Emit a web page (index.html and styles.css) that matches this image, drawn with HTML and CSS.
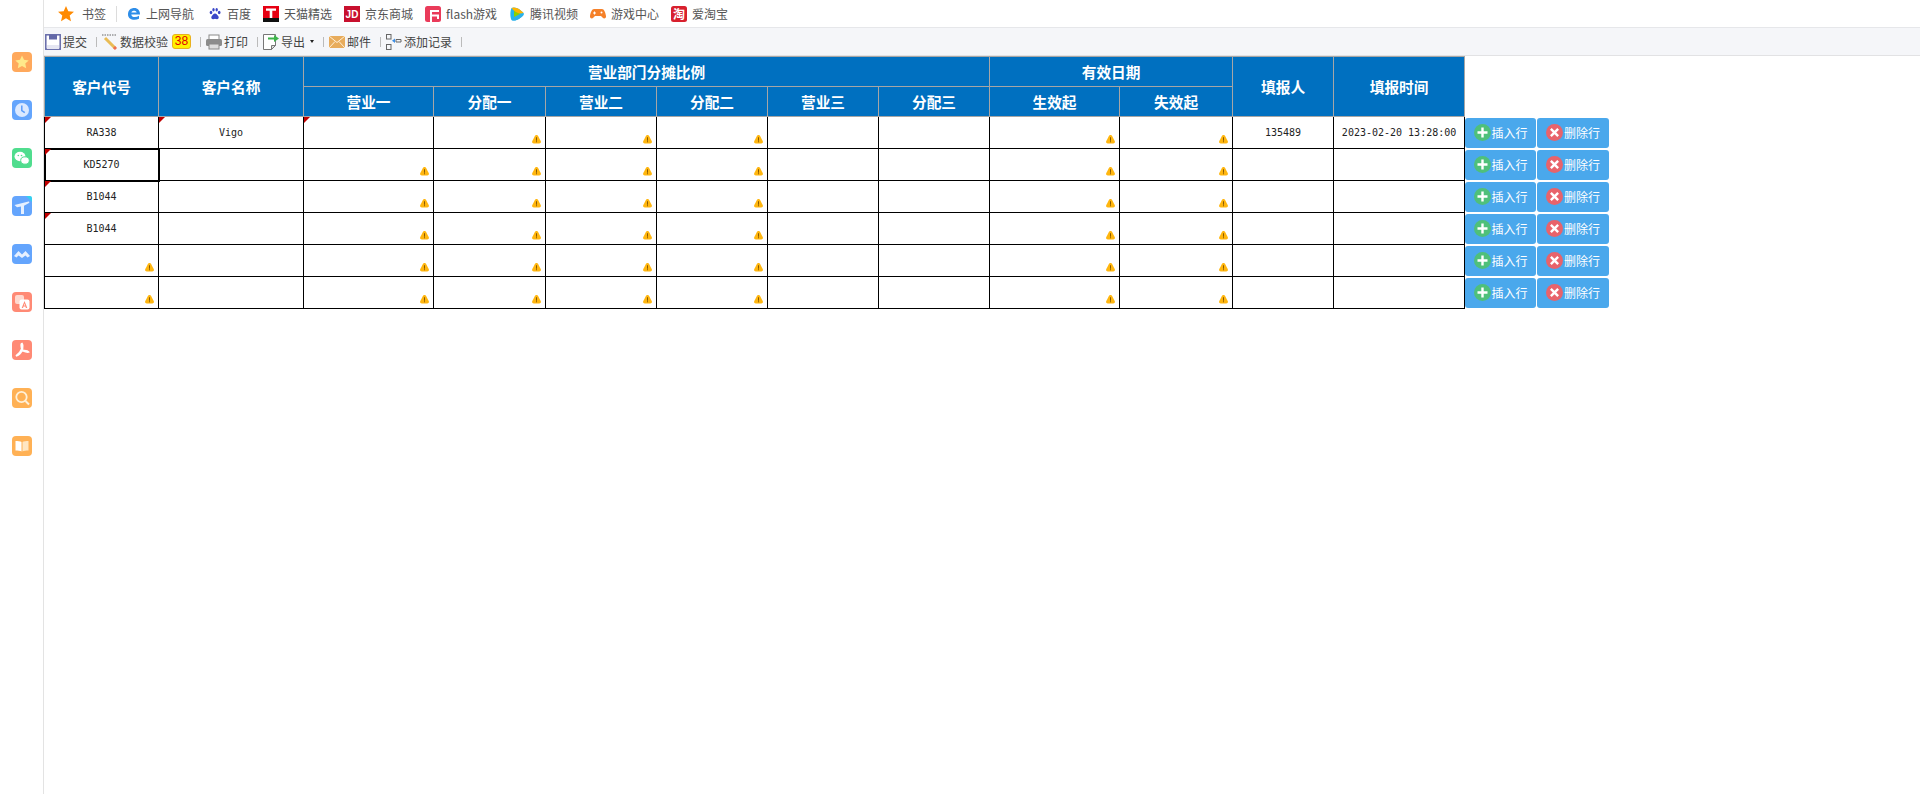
FILE: index.html
```html
<!DOCTYPE html>
<html lang="zh">
<head>
<meta charset="utf-8">
<title>客户分摊</title>
<link rel="stylesheet" href="styles.css">
</head>
<body>
<svg class="defs" width="0" height="0">
  <symbol id="w" viewBox="0 0 9 9"><path d="M4.500 0c.8 0 1.300.5 1.700 1.200l2.500 4.700C9.300 7.200 8.600 8.600 7.200 8.600H1.800C.4 8.600-.3 7.200.3 5.900L2.800 1.200C3.200.5 3.700 0 4.500 0z" fill="#ffb60f"/><path d="M4 2.300h1v3.400H4zM4 6.300h1v1H4z" fill="#8a5a00"/></symbol>
  <symbol id="plus" viewBox="0 0 17 17"><circle cx="8.500" cy="8.500" r="8.500" fill="#4fc07a"/><path d="M7.300 3.500h2.400v3.800h3.800v2.400H9.700v3.800H7.300V9.700H3.500V7.300h3.800z" fill="#fff"/></symbol>
  <symbol id="cross" viewBox="0 0 17 17"><circle cx="8.500" cy="8.500" r="8.500" fill="#e8636b"/><path d="M5.700 4 8.500 6.800 11.300 4 13 5.700 10.200 8.500 13 11.300 11.300 13 8.500 10.200 5.700 13 4 11.300 6.800 8.500 4 5.700z" fill="#fff"/></symbol>
</svg>
<div class="app">
  <aside class="side">
    <div class="app-ic orange"><svg viewBox="0 0 20 20"><path d="M10 3.500l2 4.300 4.700.6-3.400 3.200.9 4.700L10 14l-4.200 2.300.9-4.700-3.400-3.200 4.700-.6z" fill="#ffe98a"/></svg></div>
    <div class="app-ic blue"><svg viewBox="0 0 20 20"><circle cx="10" cy="10" r="7" fill="#dbe9ff"/><path d="M9.800 5.500v5l3 2.200" stroke="#5b9dfb" stroke-width="1.500" fill="none"/></svg></div>
    <div class="app-ic green"><svg viewBox="0 0 20 20"><ellipse cx="8" cy="8.500" rx="5.500" ry="4.700" fill="#fff"/><ellipse cx="13" cy="12.500" rx="4.300" ry="3.700" fill="#fff" stroke="#4fdc8c"/><circle cx="6.300" cy="7.500" r=".8" fill="#4fdc8c"/><circle cx="9.500" cy="7.500" r=".8" fill="#4fdc8c"/></svg></div>
    <div class="app-ic blue"><svg viewBox="0 0 20 20"><path d="M14 0h4a2 2 0 0 1 2 2v4z" fill="#35d0f0"/><path d="M2.500 9l14-3.500c1-.2 1.200 1 .5 1.400L12 9.800V18H9v-7.500l-4 .7z" fill="#e6f0ff"/></svg></div>
    <div class="app-ic blue"><svg viewBox="0 0 20 20"><path d="M2 12 6.500 7 10 10.500 13.500 7 18 12l-2.500 1.500-2-2L10 14l-3.500-2.500-2 2z" fill="#e6f0ff"/></svg></div>
    <div class="app-ic coral"><svg viewBox="0 0 20 20"><rect x="3" y="3" width="9" height="9" rx="2" fill="#ffd9cf"/><rect x="7.500" y="7.500" width="10" height="10" rx="2" fill="#fff"/><path d="M12.500 9l2.800 7h-1.400l-.5-1.400h-1.900l-.5 1.400h-1.300zM11.900 13.500h1.300l-.6-1.900z" fill="#ff8a75"/></svg></div>
    <div class="app-ic coral"><svg viewBox="0 0 20 20"><path d="M10 3.500c-1.200 0-.8 3.500-.2 5.200C9 11 6 14.500 4 16c2.500-.500 5-3.200 6-5.500 2 .8 4.500 2 6.500 1.500-1-1.700-4.300-1.500-6-1.300-.3-2 .8-6.700-.5-6.700z" fill="none" stroke="#fff" stroke-width="1.700"/></svg></div>
    <div class="app-ic amber"><svg viewBox="0 0 20 20"><circle cx="9.500" cy="9" r="5.200" fill="none" stroke="#fff0d8" stroke-width="1.800"/><path d="M13.500 13l3.500 3.500" stroke="#fff0d8" stroke-width="2"/></svg></div>
    <div class="app-ic amber"><svg viewBox="0 0 20 20"><path d="M3.500 5c2 0 5 0 6 1v9.500c-1-1-4-1-6-1z" fill="#fff"/><path d="M16.500 5c-2 0-5 0-6 1v9.500c1-1 4-1 6-1z" fill="#ffe6c2"/></svg></div>
  </aside>
  <div class="main">
    <nav class="bookmarks">
      <a class="bm first"><svg class="ic16" viewBox="0 0 16 16"><path d="M8 0l2.300 5.300 5.700.5-4.300 3.800 1.300 5.600L8 12.300l-5 2.900 1.300-5.600L0 5.800l5.700-.5z" fill="#ff8a00"/></svg>书签</a>
      <i class="bm-sep"></i>
      <a class="bm nav"><svg class="ic14" viewBox="0 0 14 14"><path d="M1 7.500C1 3 4 1 7.300 1c3.500 0 5.700 2.400 5.700 6.500H4.300c0 2.700 4.300 3.500 7.700 1.300v3c-5 2.400-11 .6-11-4.300zM4.400 5.500h5.200C9.400 3.300 4.700 3.300 4.400 5.500z" fill="#2e8de8"/></svg>上网导航</a>
      <a class="bm"><svg class="ic14" viewBox="0 0 14 14" fill="#3a46c8"><ellipse cx="3" cy="5.500" rx="1.300" ry="1.700"/><ellipse cx="5.500" cy="2.800" rx="1.200" ry="1.700"/><ellipse cx="8.700" cy="2.800" rx="1.200" ry="1.700"/><ellipse cx="11.200" cy="5.500" rx="1.300" ry="1.700"/><path d="M7 6.500c1.500 0 2 1.300 3 2.300 1.300 1.300.8 3.700-1.200 3.400-1-.1-1.500-.4-1.800-.4s-.9.300-1.800.4c-2 .3-2.500-2.100-1.200-3.400C5 7.800 5.500 6.500 7 6.500z"/></svg>百度</a>
      <a class="bm"><svg class="ic16" viewBox="0 0 16 16"><rect width="16" height="16" fill="#e60012"/><rect y="12" width="16" height="4" fill="#111"/><path d="M3 2.500h10v2.200H9.300V12H6.700V4.700H3z" fill="#fff"/></svg>天猫精选</a>
      <a class="bm"><svg class="ic16" viewBox="0 0 16 16"><rect width="16" height="16" fill="#c8102e"/><text x="8" y="12" class="jd">JD</text></svg>京东商城</a>
      <a class="bm"><svg class="ic16" viewBox="0 0 16 16"><rect width="16" height="16" rx="2.500" fill="#ea3b5a"/><path d="M5 4h9v2H7v2.500h7V13h-2v-2.500H7V16H5z" fill="#fff"/></svg>flash游戏</a>
      <a class="bm"><svg class="ic16" viewBox="0 0 16 16"><path d="M2.500 2c4-2 9.500 2 12 5 .6.700.6 1.400 0 2-2.500 3-8 7-12 5C1 11 1 5 2.500 2z" fill="#25b4f0"/><path d="M2.500 2c4-2 9.500 2 12 5L8 8z" fill="#ffb400"/><path d="M2.500 14c4 2 9.500-2 12-5L8 8z" fill="#2fb0e8"/><path d="M5 5l6 3-6 3z" fill="#8ed100"/></svg>腾讯视频</a>
      <a class="bm"><svg class="ic16" viewBox="0 0 16 16"><path d="M4 3h8c2 0 3.500 3.500 4 7 .3 2.500-2 3.500-3.500 1.500L11 10H5l-1.500 1.500C2 13.500-.3 12.500 0 10c.5-3.500 2-7 4-7z" fill="#f5812a"/><path d="M4 5.500h1v1h1v1H5v1H4v-1H3v-1h1z" fill="#fff"/><circle cx="11.500" cy="6.500" r="1" fill="#fff"/></svg>游戏中心</a>
      <a class="bm"><svg class="ic16" viewBox="0 0 16 16"><rect width="16" height="16" rx="2.500" fill="#d8202e"/><text x="8" y="13" class="tao">淘</text></svg>爱淘宝</a>
    </nav>
    <div class="toolbar">
      <a class="tool"><svg class="ic16" viewBox="0 0 16 16"><rect x=".8" y=".8" width="14.400" height="14.400" fill="#fff" stroke="#6469a8" stroke-width="1.500"/><path d="M4 1h8v4.500H4z" fill="#6469a8"/><path d="M2 11h12v4H2z" fill="#e5e6f2"/></svg>提交</a>
      <i class="sep"></i>
      <a class="tool"><svg class="ic16" viewBox="0 0 16 16"><path d="M0 1h15" stroke="#666" stroke-dasharray="1.500 1"/><path d="M3 4l10 10" stroke="#e9bc55" stroke-width="3"/><path d="M12 13l2 2" stroke="#ef6f50" stroke-width="3"/></svg>数据校验<b class="badge">38</b></a>
      <i class="sep"></i>
      <a class="tool"><svg class="ic16" viewBox="0 0 16 16"><rect x="3" y="1" width="10" height="5" fill="#fff" stroke="#8a8a8a"/><rect y="5" width="16" height="7" rx="1.500" fill="#8c8c8c"/><rect x="3" y="10" width="10" height="5" fill="#ddd" stroke="#8a8a8a"/></svg>打印</a>
      <i class="sep"></i>
      <a class="tool"><svg class="ic16" viewBox="0 0 16 16"><path d="M.5.500h12v11l-4 4h-8z" fill="#fff" stroke="#777"/><path d="M8.500 11.500h4l-4 4z" fill="#ddd" stroke="#777"/><path d="M5 3.500h6V1l5 3.500L11 8V5.500H5z" fill="#3cb44a"/></svg>导出<span class="caret"></span></a>
      <i class="sep"></i>
      <a class="tool"><svg class="ic16" viewBox="0 0 16 16"><rect y="2" width="16" height="12" fill="#e8ac5c"/><path d="M0 2l8 6.500L16 2M0 14l6-6.500M16 14l-6-6.500" fill="none" stroke="#fff0d8"/></svg>邮件</a>
      <i class="sep"></i>
      <a class="tool"><svg class="ic16" viewBox="0 0 16 16"><g fill="none" stroke="#666"><rect x=".5" y=".5" width="4.500" height="4.500"/><rect x=".5" y="10.500" width="4.500" height="5"/><path d="M10 5.500h5v2.500h-5z"/></g><path d="M6 6.800l3-2.300v4.600z" fill="#3a8ee6"/></svg>添加记录</a>
      <i class="sep"></i>
    </div>
    <table class="sheet">
      <colgroup>
        <col class="c114"><col class="c145"><col class="c130"><col class="c112"><col class="c111"><col class="c111"><col class="c111"><col class="c111"><col class="c130"><col class="c113"><col class="c101"><col class="c131"><col class="c146">
      </colgroup>
      <thead>
        <tr>
          <th rowspan="2">客户代号</th>
          <th rowspan="2">客户名称</th>
          <th colspan="6">营业部门分摊比例</th>
          <th colspan="2">有效日期</th>
          <th rowspan="2">填报人</th>
          <th rowspan="2">填报时间</th>
          <td rowspan="2" class="blank"></td>
        </tr>
        <tr>
          <th>营业一</th><th>分配一</th><th>营业二</th><th>分配二</th><th>营业三</th><th>分配三</th><th>生效起</th><th>失效起</th>
        </tr>
      </thead>
      <tbody>
        <tr>
          <td class="mark">RA338</td><td class="mark">Vigo</td><td class="mark"></td>
          <td><svg class="warn"><use href="#w"/></svg></td><td><svg class="warn"><use href="#w"/></svg></td><td><svg class="warn"><use href="#w"/></svg></td><td></td><td></td>
          <td><svg class="warn"><use href="#w"/></svg></td><td><svg class="warn"><use href="#w"/></svg></td>
          <td>135489</td><td>2023-02-20 13:28:00</td>
          <td class="actions"><div class="btns"><a class="btn"><svg class="bi"><use href="#plus"/></svg>插入行</a><a class="btn"><svg class="bi"><use href="#cross"/></svg>删除行</a></div></td>
        </tr>
        <tr>
          <td class="mark sel">KD5270</td><td></td>
          <td><svg class="warn"><use href="#w"/></svg></td><td><svg class="warn"><use href="#w"/></svg></td><td><svg class="warn"><use href="#w"/></svg></td><td><svg class="warn"><use href="#w"/></svg></td><td></td><td></td>
          <td><svg class="warn"><use href="#w"/></svg></td><td><svg class="warn"><use href="#w"/></svg></td>
          <td></td><td></td>
          <td class="actions"><div class="btns"><a class="btn"><svg class="bi"><use href="#plus"/></svg>插入行</a><a class="btn"><svg class="bi"><use href="#cross"/></svg>删除行</a></div></td>
        </tr>
        <tr>
          <td class="mark">B1044</td><td></td>
          <td><svg class="warn"><use href="#w"/></svg></td><td><svg class="warn"><use href="#w"/></svg></td><td><svg class="warn"><use href="#w"/></svg></td><td><svg class="warn"><use href="#w"/></svg></td><td></td><td></td>
          <td><svg class="warn"><use href="#w"/></svg></td><td><svg class="warn"><use href="#w"/></svg></td>
          <td></td><td></td>
          <td class="actions"><div class="btns"><a class="btn"><svg class="bi"><use href="#plus"/></svg>插入行</a><a class="btn"><svg class="bi"><use href="#cross"/></svg>删除行</a></div></td>
        </tr>
        <tr>
          <td class="mark">B1044</td><td></td>
          <td><svg class="warn"><use href="#w"/></svg></td><td><svg class="warn"><use href="#w"/></svg></td><td><svg class="warn"><use href="#w"/></svg></td><td><svg class="warn"><use href="#w"/></svg></td><td></td><td></td>
          <td><svg class="warn"><use href="#w"/></svg></td><td><svg class="warn"><use href="#w"/></svg></td>
          <td></td><td></td>
          <td class="actions"><div class="btns"><a class="btn"><svg class="bi"><use href="#plus"/></svg>插入行</a><a class="btn"><svg class="bi"><use href="#cross"/></svg>删除行</a></div></td>
        </tr>
        <tr>
          <td><svg class="warn"><use href="#w"/></svg></td><td></td>
          <td><svg class="warn"><use href="#w"/></svg></td><td><svg class="warn"><use href="#w"/></svg></td><td><svg class="warn"><use href="#w"/></svg></td><td><svg class="warn"><use href="#w"/></svg></td><td></td><td></td>
          <td><svg class="warn"><use href="#w"/></svg></td><td><svg class="warn"><use href="#w"/></svg></td>
          <td></td><td></td>
          <td class="actions"><div class="btns"><a class="btn"><svg class="bi"><use href="#plus"/></svg>插入行</a><a class="btn"><svg class="bi"><use href="#cross"/></svg>删除行</a></div></td>
        </tr>
        <tr>
          <td><svg class="warn"><use href="#w"/></svg></td><td></td>
          <td><svg class="warn"><use href="#w"/></svg></td><td><svg class="warn"><use href="#w"/></svg></td><td><svg class="warn"><use href="#w"/></svg></td><td><svg class="warn"><use href="#w"/></svg></td><td></td><td></td>
          <td><svg class="warn"><use href="#w"/></svg></td><td><svg class="warn"><use href="#w"/></svg></td>
          <td></td><td></td>
          <td class="actions"><div class="btns"><a class="btn"><svg class="bi"><use href="#plus"/></svg>插入行</a><a class="btn"><svg class="bi"><use href="#cross"/></svg>删除行</a></div></td>
        </tr>
      </tbody>
    </table>
  </div>
</div>
</body>
</html>
```

FILE: styles.css
```css
* { box-sizing: border-box; }
html, body { margin: 0; height: 100%; background: #fff; overflow: hidden; }
body { font-family: "Noto Sans CJK SC", "Noto Sans", sans-serif; font-size: 12px; color: #444; }
.defs { display: block; height: 0; }
.app { display: flex; height: 794px; }

.side { width: 44px; flex: none; border-right: 1px solid #e3e3e3; padding: 52px 0 0 12px; display: flex; flex-direction: column; gap: 28px; }
.app-ic { width: 20px; height: 20px; border-radius: 4px; }
.app-ic svg { display: block; width: 20px; height: 20px; }
.orange { background: #ffa95c; }
.blue { background: #64a5fd; }
.green { background: #50dd8e; }
.coral { background: #ff8a75; }
.amber { background: #ffb155; }

.main { flex: 1; min-width: 0; }
.bookmarks { height: 28px; display: flex; align-items: center; padding-left: 14px; border-bottom: 1px solid #e6e7ea; background: #fff; }
.bm { display: flex; align-items: center; gap: 5px; margin-right: 12px; color: #555; line-height: 1; white-space: nowrap; }
.bm.first { gap: 8px; margin-right: 10px; }
.bm.nav { margin-right: 14px; }
.bm-sep { width: 1px; height: 16px; background: #dcdcdc; margin-right: 10px; }
.ic14 { width: 14px; height: 14px; flex: none; }
.ic16 { width: 16px; height: 16px; flex: none; }
.jd { font: bold 10px "Liberation Sans", sans-serif; fill: #fff; text-anchor: middle; }
.tao { font: bold 12px "Noto Sans CJK SC", sans-serif; fill: #fff; text-anchor: middle; }

.toolbar { height: 28px; display: flex; align-items: center; padding-left: 1px; background: #f5f6f9; border-bottom: 1px solid #e2e2e4; }
.tool { display: flex; align-items: center; gap: 2px; color: #444; line-height: 1; white-space: nowrap; }
.sep { width: 1px; height: 10px; background: #bbb; margin: 0 5px 0 9px; }
.badge { margin-left: 2px; width: 19px; height: 15px; border: 1px solid #e9b020; border-radius: 3px; background: #fff200; color: #e00000; font: 12px "Liberation Sans", sans-serif; text-align: center; line-height: 13px; }
.caret { margin-left: 3px; border: 2.500px solid transparent; border-top: 3px solid #222; border-bottom: 0; }

.sheet { border-collapse: collapse; table-layout: fixed; width: 1565px; }
.c114 { width: 114px; } .c145 { width: 145px; } .c130 { width: 130px; } .c112 { width: 112px; }
.c111 { width: 111px; } .c113 { width: 113px; } .c101 { width: 101px; } .c131 { width: 131px; } .c146 { width: 145px; }
.sheet th { height: 30px; padding: 0; background: #0070c0; color: #fff; font-size: 11pt; font-weight: bold; border: 1px solid #a6a6a6; }
.sheet .blank { border: 0; background: #fff; }
.sheet td { position: relative; height: 32px; padding: 0; border: 1px solid #000; text-align: center; font: 10px "DejaVu Sans Mono", monospace; color: #222; white-space: pre; }
.sheet .actions { border: 0; padding: 1px 0 0; vertical-align: top; }
.sheet .sel { outline: 2px solid #000; outline-offset: -1px; }
.mark::before { content: ""; position: absolute; left: 0; top: 0; border-style: solid; border-width: 6px 6px 0 0; border-color: #c00000 transparent transparent transparent; }
.warn { position: absolute; right: 4px; bottom: 4px; width: 9px; height: 9px; }

.btns { display: flex; gap: 1px; }
.btn { display: flex; align-items: center; justify-content: center; gap: 1px; width: 71px; height: 30px; background: #4aa8ec; border-radius: 3px; color: #fff; font: 12px/1 "Noto Sans CJK SC", sans-serif; }
.btn + .btn { width: 72px; }
.bi { width: 17px; height: 17px; flex: none; }
```
